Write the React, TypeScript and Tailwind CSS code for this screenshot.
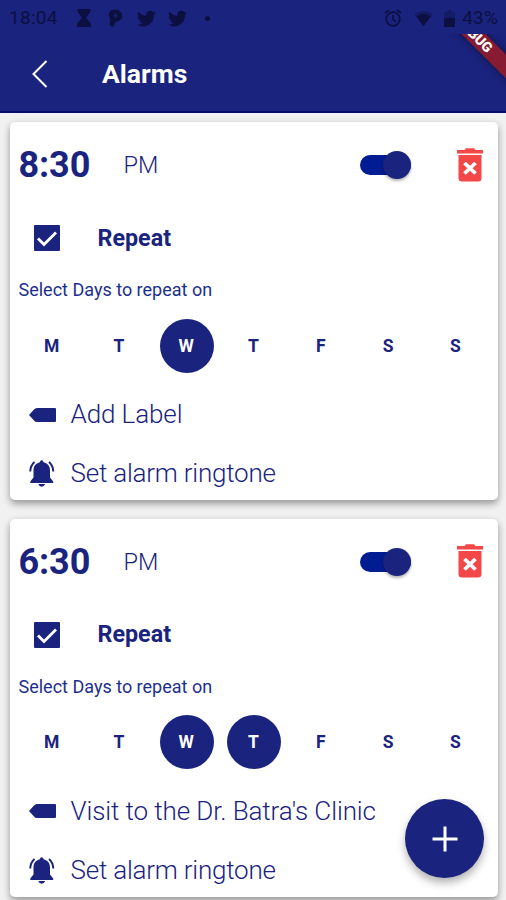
import React from "react";

const NAVY = "#1a237e";

function StatusBar() {
  return (
    <div className="flex h-9 items-center justify-between pl-[9px] pr-[8px] text-[19px] text-[#0c1040]">
      <div className="flex items-center">
        <span className="w-[67px] tracking-[0.3px]">18:04</span>
        <svg width="16" height="18" viewBox="0 0 16 18" fill="currentColor">
          <path d="M1.500 0h13v2.500L10 9l5 5.500V17q0 1-1 1H2q-1 0-1-1v-2.500L6 9 1.500 2.500z" />
        </svg>
        <svg className="ml-[16px]" width="15" height="19" viewBox="0 0 16 19">
          <path d="M3 1Q8-1 12 1Q16 4 15 9Q12 13 8 13L6 18Q3 19 2 16V9Q-1 5 3 1Z" fill="currentColor" />
          <path d="M8 4v5M5.500 6.500h5" stroke={NAVY} strokeWidth="1.200" />
        </svg>
        <Bird className="ml-[14px]" />
        <Bird className="ml-[12px]" />
        <span className="ml-[18px] size-[5px] rounded-full bg-current" />
      </div>
      <div className="flex items-center">
        <svg width="18" height="18" viewBox="0 0 18 18" fill="none" stroke="currentColor" strokeWidth="1.700">
          <circle cx="9" cy="10" r="6.800" />
          <path d="M9 6v4.500l3 2M1 4l4-3M17 4l-4-3" />
        </svg>
        <svg className="ml-[12px]" width="19" height="15" viewBox="0 0 19 15">
          <path d="M0 3Q9.500-3 19 3L9.500 15z" fill="currentColor" opacity=".4" />
          <path d="M2.500 5.500Q9.500 0 16.500 5.500L9.500 15z" fill="currentColor" />
        </svg>
        <svg className="ml-[11px]" width="11" height="17" viewBox="0 0 11 17" fill="currentColor">
          <path d="M3 0h5v2h3v7H0V2h3z" opacity=".35" />
          <path d="M0 8h11v9H0z" />
        </svg>
        <span className="ml-[7px] tracking-[0.2px]">43%</span>
      </div>
    </div>
  );
}

function Bird({ className }: { className: string }) {
  return (
    <svg className={className} width="19" height="17" viewBox="0 0 24 21" fill="currentColor">
      <path d="M24 3.200c-.9.4-1.800.6-2.800.8 1-.6 1.800-1.600 2.200-2.700-1 .5-2 1-3.100 1.200a4.900 4.900 0 0 0-8.400 4.500C7.700 6.800 4.100 4.800 1.700 1.900a4.900 4.900 0 0 0 1.500 6.500c-.8 0-1.600-.2-2.200-.6a4.900 4.900 0 0 0 3.900 4.900c-.7.2-1.500.2-2.200.1a4.900 4.900 0 0 0 4.600 3.400A9.900 9.900 0 0 1 0 18.200a13.900 13.900 0 0 0 21.500-12.400c1-.7 1.800-1.600 2.500-2.600z" />
    </svg>
  );
}

function Trash() {
  return (
    <svg width="26" height="34" viewBox="0 0 26 34" fill="#f44747">
      <path d="M0 2h7.500L9 .3h8L18.500 2H26v3.500H0zM1.500 7h23v23a3.500 3.500 0 0 1-3.500 3.500H5A3.500 3.500 0 0 1 1.500 30z" />
      <path d="M7.500 15l11 10.500m0-10.500l-11 10.500" stroke="#fff" strokeWidth="3.800" />
    </svg>
  );
}

function Bell() {
  return (
    <svg width="26" height="27" viewBox="0 0 26 27" fill="currentColor">
      <path d="M10.900 2.300Q11 .3 12.700.3T14.500 2.300C19 3.300 21 6.500 21 10.500v7l3.200 4V23H1.300v-1.500l3.200-4v-7c0-4 2-7.200 6.400-8.200zM9.200 24h7Q15 26.700 12.700 26.700T9.200 24z" />
      <path d="M5.500 2Q1.500 5.500 1.200 11.500M20 2Q24 5.500 24.300 11.500" fill="none" stroke="currentColor" strokeWidth="2" />
    </svg>
  );
}

type Alarm = { time: string; label: string; selected: number[] };

function AlarmCard({ time, label, selected }: Alarm) {
  return (
    <section className="h-[378px] rounded-[5px] bg-white px-[9px] shadow-[0_4px_7px_rgba(0,0,0,0.32),0_1px_9px_rgba(0,0,0,0.08)]">
      <div className="flex h-[86px] items-center">
        <span className="w-[105px] text-[36px] font-bold tracking-[-0.1px]">{time}</span>
        <span className="pt-[2px] text-[23.5px] font-light">PM</span>
        <div className="ml-auto flex h-[28px] w-[51px] items-center">
          <div className="flex h-[20px] w-[51px] items-center justify-end rounded-full bg-[#001c92]">
            <div className="size-[28px] shrink-0 rounded-full bg-[#1a237e] shadow-[0_2px_3px_rgba(0,0,0,0.3)]" />
          </div>
        </div>
        <div className="ml-[46px] mr-[6px] pb-[1px]"><Trash /></div>
      </div>
      <div className="flex h-[60px] items-center pl-[15px]">
        <svg width="26" height="26" viewBox="0 0 26 26">
          <rect width="26" height="26" rx="1" fill={NAVY} />
          <path d="M4 13.500l6 6L22 7.500" fill="none" stroke="#fff" strokeWidth="2.800" />
        </svg>
        <span className="ml-[38px] text-[23.3px] font-bold">Repeat</span>
      </div>
      <div className="flex h-[44px] items-center pb-[1px] text-[18px] text-[#1d2f8d]"><span>Select Days to repeat on</span></div>
      <div className="grid h-[67px] w-[471px] grid-cols-7 place-items-center">
        {["M", "T", "W", "T", "F", "S", "S"].map((day, i) => (
          <span
            key={i}
            className={
              "flex size-[54px] items-center justify-center rounded-full pr-[1px] pt-[1px] text-[17.5px] font-bold " +
              (selected.includes(i) ? "bg-[#1a237e] text-white" : "")
            }
          >
            {day}
          </span>
        ))}
      </div>
      <div className="flex h-[71px] items-center pl-[10px] text-[26px] font-light tracking-[-0.1px]">
        <svg className="mr-[15px]" width="27" height="14" viewBox="0 0 27 14" fill="currentColor">
          <path d="M0 7L5 1.500Q6.200 0 8 0H26Q27 0 27 1V13Q27 14 26 14H8Q6.200 14 5 12.500z" />
        </svg>
        <span>{label}</span>
      </div>
      <div className="flex h-[47px] items-center pl-[10px] text-[26px] font-light tracking-[-0.22px]">
        <span className="mr-[16px]"><Bell /></span>
        <span>Set alarm ringtone</span>
      </div>
    </section>
  );
}

export default function App() {
  return (
    <div className="relative h-[900px] w-[506px] overflow-hidden bg-[#f1f1f1] font-['Roboto',sans-serif] text-[#1a237e]">
      <header className="relative h-[113px] overflow-hidden border-b-2 border-[#080b6e] bg-[#1a237e]">
        <StatusBar />
        <div className="flex h-[76px] items-center pl-[32px] text-white">
          <svg width="16" height="28" viewBox="0 0 16 28" fill="none" stroke="currentColor" strokeWidth="2">
            <path d="M14.500 1L1.500 14l13 13" />
          </svg>
          <h1 className="ml-[54px] text-[26.5px] font-bold">Alarms</h1>
        </div>
        <div className="absolute right-0 top-[34px] h-[60px] w-[60px] overflow-hidden">
          <div className="absolute left-[-27px] top-[2px] flex h-[17px] w-[130px] rotate-45 items-center justify-center bg-[#861b31] pr-[28px] text-[14px] font-black text-white shadow-[0_0_8px_rgba(0,0,0,0.5)]">
            DEBUG
          </div>
        </div>
      </header>
      <main className="flex flex-col gap-[18.5px] pl-[9.5px] pr-[8.5px] pt-[9px]">
        <AlarmCard time="8:30" label="Add Label" selected={[2]} />
        <AlarmCard time="6:30" label="Visit to the Dr. Batra's Clinic" selected={[2, 3]} />
      </main>
      <button className="absolute left-[405px] top-[799px] flex size-[79px] items-center justify-center rounded-full bg-[#1a237e] shadow-[0_5px_9px_rgba(0,0,0,0.3)]">
        <svg width="26" height="26" viewBox="0 0 26 26" stroke="#fff" strokeWidth="3">
          <path d="M13 0.500v25M0.500 13h25" />
        </svg>
      </button>
    </div>
  );
}
